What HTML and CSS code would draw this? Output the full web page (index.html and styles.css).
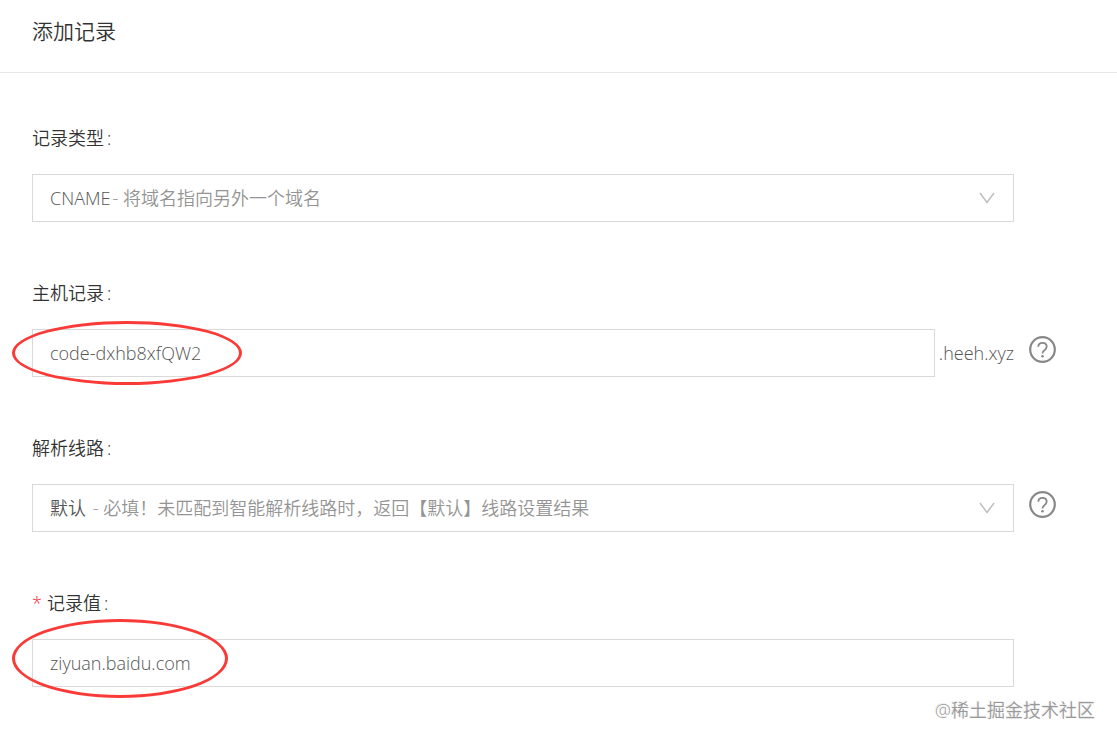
FILE: index.html
```html
<!DOCTYPE html>
<html lang="zh-CN">
<head>
  <meta charset="UTF-8">
  <meta name="viewport" content="width=device-width, initial-scale=1">
  <title>添加记录</title>
  <link rel="stylesheet" href="styles.css">
</head>
<body>
  <header class="header">
    <h1>添加记录</h1>
  </header>

  <form class="record-form">
    <!-- Record type -->
    <div class="form-item">
      <label for="recordType">记录类型<span class="colon">:</span></label>
      <div class="control">
        <select id="recordType" class="field">
          <button type="button"><selectedcontent></selectedcontent></button>
          <option value="CNAME" selected>CNAME<span class="desc">- 将域名指向另外一个域名</span></option>
        </select>
        <svg class="arrow" viewBox="0 0 16 12" aria-hidden="true"><path d="M1 1l7 9.500 7-9.500"/></svg>
      </div>
    </div>

    <!-- Host record -->
    <div class="form-item">
      <label for="host">主机记录<span class="colon">:</span></label>
      <div class="control">
        <input type="text" id="host" class="field" value="code-dxhb8xfQW2">
        <span class="suffix">.heeh.xyz</span>
        <span class="mark mark-host"></span>
      </div>
      <button type="button" class="help" aria-label="帮助">
        <svg viewBox="0 0 27 27"><circle cx="13.500" cy="13.500" r="12.300"/><path class="hook" d="M9.300 10.800c0-2.500 1.800-4 4.200-4s4.200 1.500 4.200 3.800c0 2.100-1.200 2.900-2.500 3.900-1.100.8-1.700 1.400-1.700 3.100"/><circle class="dot" cx="13.500" cy="20.300" r="1.300"/></svg>
      </button>
    </div>

    <!-- Line -->
    <div class="form-item">
      <label for="line">解析线路<span class="colon">:</span></label>
      <div class="control">
        <select id="line" class="field">
          <button type="button"><selectedcontent></selectedcontent></button>
          <option value="default" selected>默认<span class="desc"> - 必填！未匹配到智能解析线路时，返回【默认】线路设置结果</span></option>
        </select>
        <svg class="arrow" viewBox="0 0 16 12" aria-hidden="true"><path d="M1 1l7 9.500 7-9.500"/></svg>
      </div>
      <button type="button" class="help" aria-label="帮助">
        <svg viewBox="0 0 27 27"><circle cx="13.500" cy="13.500" r="12.300"/><path class="hook" d="M9.300 10.800c0-2.500 1.800-4 4.200-4s4.200 1.500 4.200 3.800c0 2.100-1.200 2.900-2.500 3.900-1.100.8-1.700 1.400-1.700 3.100"/><circle class="dot" cx="13.500" cy="20.300" r="1.300"/></svg>
      </button>
    </div>

    <!-- Record value -->
    <div class="form-item">
      <label for="value"><span class="required">*</span>记录值<span class="colon">:</span></label>
      <div class="control">
        <input type="text" id="value" class="field" value="ziyuan.baidu.com">
        <span class="mark mark-value"></span>
      </div>
    </div>
  </form>

  <div class="watermark">@稀土掘金技术社区</div>
</body>
</html>
```
FILE: styles.css
```css
* {
  margin: 0;
  padding: 0;
  box-sizing: border-box;
}

body {
  position: relative;
  min-height: 100vh;
  background-color: #fff;
  color: #333;
  font-family: "Open Sans", "Noto Sans CJK SC", sans-serif;
  font-size: 18px;
  font-weight: 350;
  line-height: 28px;
}

.header {
  padding: 15px 32px 25px;
  border-bottom: 1px solid #e6e8eb;
}

.header h1 {
  font-size: 21px;
  font-weight: 350;
  line-height: 32px;
}

.record-form {
  display: flex;
  flex-direction: column;
  gap: 57px;
  padding: 51px 61px 40px 32px;
}

.form-item {
  display: grid;
  grid-template-columns: 1fr 27px;
  column-gap: 15px;
  row-gap: 22px;
}

.form-item label {
  grid-column: 1 / -1;
}

.colon {
  margin-left: 3px;
}

.required {
  margin-right: 5px;
  color: #f5222d;
}

.control {
  position: relative;
  display: flex;
  align-items: center;
  gap: 4px;
}

.field {
  flex: 1;
  min-width: 0;
  height: 48px;
  padding: 0 17px;
  border: 1px solid #d9d9d9;
  border-radius: 0;
  background-color: #fff;
  color: #555;
  font: inherit;
  line-height: 46px;
  outline: none;
}

select.field {
  appearance: none;
  appearance: base-select;
}

select.field::picker-icon {
  display: none;
}

.field:focus {
  border-color: #999;
}

.desc {
  margin-left: 2px;
  color: #949494;
  white-space: pre;
}

.arrow {
  position: absolute;
  right: 19px;
  width: 16px;
  height: 12px;
  fill: none;
  stroke: #bfbfbf;
  stroke-width: 1.5;
  pointer-events: none;
}

.suffix {
  color: #555;
}

.help {
  width: 27px;
  height: 27px;
  margin-top: 7px;
  border: none;
  background: none;
  cursor: pointer;
}

.help svg {
  display: block;
  fill: none;
  stroke: #888;
  stroke-width: 2.2;
}

.help .hook {
  stroke-width: 1.8;
}

.help .dot {
  fill: #888;
  stroke: none;
}

/* red circles around the values to copy */
.mark {
  position: absolute;
  left: -20px;
  border: 3px solid #f93a37;
  border-radius: 50%;
  pointer-events: none;
}

.mark-host {
  top: -8px;
  width: 230px;
  height: 64px;
}

.mark-value {
  top: -20px;
  width: 216px;
  height: 79px;
}

.watermark {
  position: absolute;
  right: 22px;
  bottom: 18px;
  color: #999;
  text-shadow: -1px -1px 0 #eee;
}
```
